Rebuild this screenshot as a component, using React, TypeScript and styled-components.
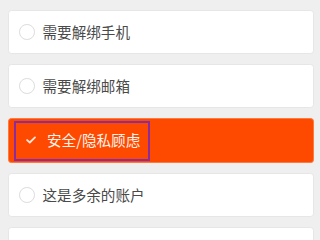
import React from "react";
import styled, { createGlobalStyle } from "styled-components";

/* All sizes are expressed in reference pixels of a 285px-wide frame,
   scaled to the actual viewport width. */
const u = (n: number) => `calc(${n} * 100vw / 285)`;

const Global = createGlobalStyle`
  html, body { margin: 0; padding: 0; background: #efefef; overflow: hidden; }
  body { font-family: "Noto Sans CJK SC", "Noto Sans", sans-serif; }
`;

const List = styled.div`
  display: flex;
  flex-direction: column;
  gap: ${u(9)};
  padding: ${u(9)} ${u(5)} 0 ${u(7)};
  height: 100vh;
  box-sizing: border-box;
  overflow: hidden;
`;

const Card = styled.div<{ $active?: boolean }>`
  position: relative;
  flex: 0 0 auto;
  height: ${(p) => (p.$active ? u(40) : u(39))};
  margin: ${(p) => (p.$active ? `-${u(1)} -${u(1)} 0 0` : "0")};
  box-sizing: border-box;
  display: flex;
  align-items: center;
  gap: ${u(7)};
  padding-left: ${(p) => (p.$active ? u(13) : u(9))};
  border-radius: ${u(3)};
  background: ${(p) => (p.$active ? "#fe4a00" : "#ffffff")};
  border: ${u(1)} solid ${(p) => (p.$active ? "#ff7a3c" : "#e6e6e6")};
`;

const Radio = styled.span`
  width: ${u(14)};
  height: ${u(14)};
  box-sizing: border-box;
  border-radius: 50%;
  border: ${u(1)} solid #dcdcdc;
  flex: 0 0 auto;
`;

const CheckBox = styled.span`
  width: ${u(14)};
  height: ${u(14)};
  display: flex;
  align-items: center;
  justify-content: center;
  flex: 0 0 auto;
  svg { width: ${u(9)}; height: ${u(7)}; }
`;

const Label = styled.span<{ $active?: boolean }>`
  font-size: ${u(13)};
  line-height: ${u(16)};
  color: ${(p) => (p.$active ? "#fff3ec" : "#4a4a4a")};
  white-space: nowrap;
`;

const Highlight = styled.div`
  position: absolute;
  left: ${u(5)};
  top: ${u(2)};
  width: ${u(121)};
  height: ${u(36)};
  box-sizing: border-box;
  border: ${u(2)} solid #8a2c9e;
  pointer-events: none;
`;

const items = ["需要解绑手机", "需要解绑邮箱", "安全/隐私顾虑", "这是多余的账户", ""];

export default function App() {
  return (
    <>
      <Global />
      <List>
        {items.map((t, i) => {
          const active = i === 2;
          return (
            <Card key={i} $active={active}>
              {active ? (
                <CheckBox>
                  <svg viewBox="0 0 9 7">
                    <path d="M1 3.6 L3.4 5.8 L8 1.2" fill="none" stroke="#ffe6d8" strokeWidth="1.6" strokeLinecap="round" strokeLinejoin="round" />
                  </svg>
                </CheckBox>
              ) : (
                <Radio />
              )}
              {t && <Label $active={active}>{t}</Label>}
              {active && <Highlight />}
            </Card>
          );
        })}
      </List>
    </>
  );
}
